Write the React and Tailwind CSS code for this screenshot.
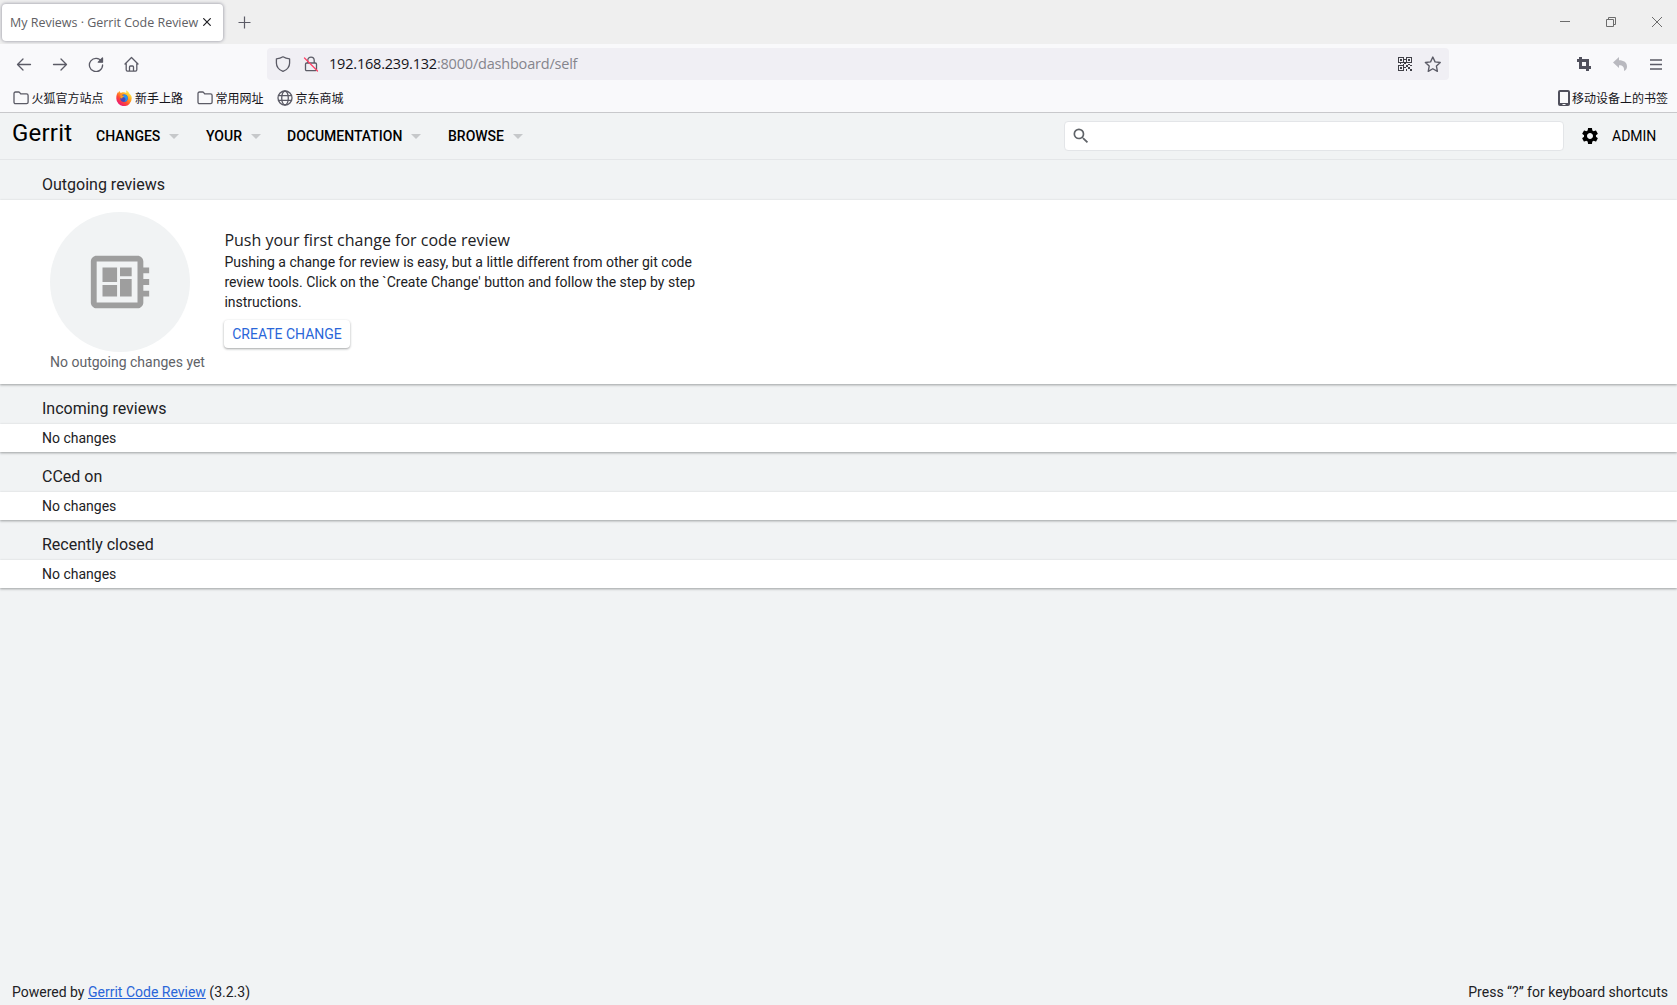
const menus = [
  { label: "CHANGES", className: "w-[110px]" },
  { label: "YOUR", className: "w-[81px]" },
  { label: "DOCUMENTATION", className: "w-[161px]" },
  { label: "BROWSE", className: "w-[90px]" },
];

const emptySections = ["Incoming reviews", "CCed on", "Recently closed"];

const Stroke = ({ children, className = "", size = 16, width = 1.3 }) => (
  <svg
    className={`shrink-0 ${className}`}
    width={size}
    height={size}
    viewBox="0 0 16 16"
    fill="none"
    stroke="currentColor"
    strokeWidth={width}
    strokeLinecap="round"
    strokeLinejoin="round"
  >
    {children}
  </svg>
);

const FolderIcon = () => (
  <Stroke>
    <path d="M1 12.2V3.6C1 2.7 1.6 2 2.5 2h3.1c.5 0 .8.2 1.1.6l1 1.3h5.8c.9 0 1.6.7 1.6 1.6v6.7c0 .9-.7 1.4-1.6 1.4h-11C1.6 13.6 1 13.1 1 12.2z" />
  </Stroke>
);

const GlobeIcon = () => (
  <Stroke>
    <circle cx="8" cy="8" r="7" />
    <ellipse cx="8" cy="8" rx="3.3" ry="7" />
    <path d="M1.5 5.6h13M1.5 10.4h13" />
  </Stroke>
);

const FirefoxIcon = () => (
  <svg className="shrink-0" width="16" height="16" viewBox="0 0 16 16">
    <defs>
      <linearGradient id="fox" x1="0.85" y1="0.1" x2="0.2" y2="0.95">
        <stop offset="0" stopColor="#fff14a" />
        <stop offset="0.35" stopColor="#ffa51e" />
        <stop offset="0.65" stopColor="#ff4a33" />
        <stop offset="1" stopColor="#e8127c" />
      </linearGradient>
    </defs>
    <path
      fill="url(#fox)"
      d="M15.4 6.2c-.4-1-1.2-2-1.8-2.3-.5-1.4-1.8-2.5-3.2-3.7C10 1.6 10.3 2.5 10.6 3 9.5 2.3 8 2.1 6.7 2.3 5.9 2.5 5.4 2.8 5 3.1 4.3 2.8 3.8 2.1 3.7 1.1 2.7 1.7 2.2 2.5 2 3.3c-.1-.4 0-.9 0-1.2C.9 3.5.3 5.7.3 8.3a7.7 7.7 0 0 0 15.4.2c0-.8-.1-1.6-.3-2.3z"
    />
    <circle cx="8" cy="8.2" r="3.7" fill="#4b46b8" />
    <path fill="#2196f3" d="M7.7 4.5c2-.3 4 .8 4 3.7 0 2-1.6 3.5-3.5 3.6 1.5-1.2 1.7-2.5.9-3.7-.5-.9-1.6-1-2.4-.9z" />
    <path fill="#ff9a1e" d="M4.2 5.3c1.1-.6 2.2-.2 2.7.4.5.1 1.1.1 1.3.2 0 .6-1.2.8-1.6 1.3-.2.5 0 .8-.4 1.1-.8.3-1.5-.2-1.8 0z" />
  </svg>
);

const QrIcon = () => (
  <svg className="shrink-0" width="14" height="14" viewBox="0 0 14 14" fill="#3f3f46" shapeRendering="crispEdges">
    <path
      fillRule="evenodd"
      d="M0 0h6v6H0zM1 1v4h4V1zM8 0h6v6H8zM9 1v4h4V1zM0 8h6v6H0zM1 9v4h4V9z"
    />
    <path d="M2 2h2v2H2zM10 2h2v2h-2zM2 10h2v2H2zM6 2h2v1H6zM6 5h2v2H6zM2 6h1v1H2zM5 7h1v1H5zM8 8h2v2H8zM12 8h2v1h-2zM10 10h2v2h-2zM8 12h1v2H8zM12 12h2v2h-2zM6 10h2v1H6zM10 7h2v1h-2z" />
  </svg>
);

const TabStrip = () => (
  <div className="flex h-11 items-center bg-[#efefef] text-[#5b5b66]">
    <div className="ml-0.5 flex h-[37px] w-[221px] items-center rounded bg-white pl-2 shadow-[0_0_3px_1px_rgba(128,128,142,0.55)]">
      <span className="w-[193px] pt-[3px] font-['Open_Sans','Noto_Sans',sans-serif] text-[12.5px] tracking-[-0.015px] whitespace-nowrap text-[#606064]">
        My Reviews · Gerrit Code Review
      </span>
      <svg width="8" height="8" viewBox="0 0 8 8" fill="none" stroke="#202024" strokeWidth="1.2">
        <path d="M.3.3l7.4 7.4M7.7.3L.3 7.7" />
      </svg>
    </div>
    <svg className="mt-px ml-[15px]" width="13" height="13" viewBox="0 0 13 13" fill="none" stroke="currentColor" strokeWidth="1.2">
      <path d="M.5 6.5h12M6.5.5v12" />
    </svg>
    <svg className="mr-[13px] ml-auto text-[#6c6c6c]" width="104" height="12" viewBox="0 0 104 12" fill="none" stroke="currentColor">
      <path d="M0 5.5h10M46.5 3.5h7v7h-7zM48.5 3.5v-2h7v7h-2M92 1l10 10M102 1L92 11" />
    </svg>
  </div>
);

const Toolbar = () => (
  <div className="flex h-10 items-center bg-[#f9f9fb] text-[#5b5b66]">
    <div className="flex w-[267px] items-center gap-5 pl-4">
      <Stroke>
        <path d="M14.5 8.5h-13M7 3L1.5 8.5 7 14" />
      </Stroke>
      <Stroke>
        <path d="M1.5 8.5h13M9 3l5.5 5.5L9 14" />
      </Stroke>
      <Stroke>
        <path d="M13.6 5.5A6.6 6.6 0 1 0 14.6 9" />
        <path d="M14.5 2v4.2h-4.2z" fill="currentColor" />
      </Stroke>
      <Stroke>
        <path d="M1 8l6.500-6.500L14 8M2.200 7.500v6.300c0 .8.5 1.300 1.300 1.300h8c.8 0 1.300-.5 1.300-1.300V7.500M5.500 15v-4c0-.6.4-1 1-1h2c.6 0 1 .4 1 1v4" />
      </Stroke>
    </div>
    <div className="flex h-8 w-[1182px] items-center rounded bg-[#f0eff4] px-2">
      <Stroke>
        <path d="M8 .8C6.200 2 4 2.700 1.400 2.900v4c0 3.800 2.600 6.800 6.600 8.500 4-1.700 6.600-4.700 6.600-8.500v-4C12 2.700 9.800 2 8 .8z" />
      </Stroke>
      <Stroke className="ml-3">
        <path d="M4.800 7V4.300a3.200 3.200 0 0 1 6.400 0V7M3.700 7h8.600c.7 0 1.200.5 1.200 1.200v5.200c0 .7-.5 1.200-1.200 1.200H3.700c-.7 0-1.200-.5-1.200-1.200V8.200C2.500 7.500 3 7 3.700 7z" />
        <path d="M1.500 2l13 13" stroke="#ff4468" />
      </Stroke>
      <span className="ml-2.5 font-['Open_Sans','Noto_Sans',sans-serif] text-[14.5px] tracking-[-0.2px] whitespace-nowrap text-[#15141a]">
        192.168.239.132<span className="text-[#85858c]">:8000/dashboard/self</span>
      </span>
      <div className="ml-auto flex items-center gap-3">
        <QrIcon />
        <Stroke size={17}>
          <path d="M8.300 1l2.100 4.500 4.900.6-3.600 3.400.9 4.900-4.300-2.400L4 14.400l.9-4.900-3.600-3.400 4.900-.6z" />
        </Stroke>
      </div>
    </div>
    <div className="ml-auto flex items-center gap-5 pr-[15px]">
      <svg width="16" height="16" viewBox="0 0 16 16" fill="none" stroke="#50505c" strokeWidth="3">
        <path d="M4.500 1v10.500H15M1 4.500h10.500V15" />
      </svg>
      <svg className="mr-0.5" width="16" height="16" viewBox="0 0 16 16" fill="#b9b9bf">
        <path d="M1 6.500L7 1v3.300c4.800 0 8 2.200 8 6.200 0 2-1 3.700-3 4.500.5-3.800-1.200-5.800-5-5.800V12z" />
      </svg>
      <svg width="12" height="11" viewBox="0 0 12 11" fill="none" stroke="currentColor" strokeWidth="1.3">
        <path d="M0 1h12M0 5.500h12M0 10h12" />
      </svg>
    </div>
  </div>
);

const Bookmark = ({ icon, label, className = "" }) => (
  <div className={`flex items-center gap-[3px] ${className}`}>
    {icon}
    <span className="whitespace-nowrap text-[#15141a]">{label}</span>
  </div>
);

const BookmarksBar = () => (
  <div className="flex h-[29px] items-center justify-between border-b border-[#c8c8cb] bg-[#f9f9fb] pr-[9px] pl-[12.5px] font-['Noto_Sans_CJK_SC',sans-serif] text-xs text-[#5b5b66]">
    <div className="flex items-center">
      <Bookmark icon={<FolderIcon />} label="火狐官方站点" className="w-[103.5px]" />
      <Bookmark icon={<FirefoxIcon />} label="新手上路" className="w-[80.5px]" />
      <Bookmark icon={<FolderIcon />} label="常用网址" className="w-[80px]" />
      <Bookmark icon={<GlobeIcon />} label="京东商城" />
    </div>
    <div className="flex items-center gap-0.5">
      <svg width="12" height="16" viewBox="0 0 12 16" fill="#50505c">
        <path fillRule="evenodd" d="M2 0h8a2 2 0 0 1 2 2v12a2 2 0 0 1-2 2H2a2 2 0 0 1-2-2V2a2 2 0 0 1 2-2zM2 2v11h8V2zM4.500 14v1h3v-1z" />
      </svg>
      <span className="whitespace-nowrap text-[#15141a]">移动设备上的书签</span>
    </div>
  </div>
);

const AppHeader = () => (
  <header className="flex h-[47px] items-center border-b border-[#e4e6e8] pl-3 text-black">
    <div className="w-[84px] pb-1.5 text-2xl tracking-[0.2px]">Gerrit</div>
    <nav className="flex items-center">
      {menus.map((menu) => (
        <div key={menu.label} className={`flex items-center gap-[9px] text-sm font-medium whitespace-nowrap ${menu.className}`}>
          {menu.label}
          <svg className="shrink-0" width="10" height="5" viewBox="0 0 10 5" fill="#c6c8ca">
            <path d="M0 0h10L5 5z" />
          </svg>
        </div>
      ))}
    </nav>
    <div className="ml-auto flex h-[30px] w-[500px] items-center rounded border border-[#e3e5e8] bg-white pl-1.5">
      <svg width="20" height="20" viewBox="0 0 24 24" fill="#5f6368">
        <path d="M15.500 14h-.79l-.28-.27A6.471 6.471 0 0 0 16 9.500 6.500 6.500 0 1 0 9.500 16c1.610 0 3.090-.59 4.230-1.570l.27.280v.79l5 4.990L20.490 19l-4.990-5zm-6 0C7.010 14 5 11.990 5 9.500S7.010 5 9.500 5 14 7.010 14 9.500 11.990 14 9.500 14z" />
      </svg>
    </div>
    <svg className="ml-4" width="20" height="20" viewBox="0 0 24 24" fill="black">
      <path d="M19.140 12.940c.04-.3.060-.61.060-.94 0-.32-.02-.64-.07-.94l2.030-1.580c.18-.14.230-.41.120-.61l-1.920-3.320c-.12-.22-.37-.29-.59-.22l-2.390.96c-.5-.38-1.030-.7-1.620-.94l-.36-2.540c-.04-.24-.24-.41-.48-.41h-3.840c-.24 0-.43.170-.47.410l-.36 2.540c-.59.240-1.130.570-1.620.940l-2.390-.96c-.22-.08-.47 0-.59.220L2.740 8.870c-.12.210-.08.470.120.610l2.030 1.580c-.05.300-.09.630-.09.940s.02.640.070.940l-2.030 1.580c-.18.140-.23.410-.12.610l1.920 3.320c.12.220.37.290.59.220l2.390-.96c.5.380 1.030.7 1.620.94l.36 2.540c.05.240.240.410.480.410h3.840c.24 0 .44-.17.470-.41l.36-2.540c.59-.24 1.130-.56 1.620-.94l2.390.96c.22.080.470 0 .59-.22l1.920-3.320c.12-.22.070-.47-.12-.61l-2.010-1.580zM12 15.600c-1.980 0-3.600-1.620-3.600-3.600s1.620-3.600 3.600-3.600 3.600 1.620 3.600 3.600-1.620 3.600-3.600 3.600z" />
    </svg>
    <span className="ml-3 w-[65px] text-sm">ADMIN</span>
  </header>
);

const SectionTitle = ({ children }) => (
  <h2 className="flex h-10 items-center pt-2.5 pl-[42px] text-base">{children}</h2>
);

const Panel = ({ children, className = "" }) => (
  <div className={`bg-white shadow-[0_1px_2px_0_rgba(60,64,67,0.3),0_1px_3px_0_rgba(60,64,67,0.2)] ${className}`}>
    {children}
  </div>
);

const FirstChange = () => (
  <Panel className="flex h-[184px] pt-3 pl-[50px]">
    <div className="w-[174.4px]">
      <div className="flex h-[140px] w-[140px] items-center justify-center rounded-full bg-[#f1f3f4]">
        <svg width="70" height="70" viewBox="0 0 24 24" fill="#9e9e9e">
          <path d="M22 9V7h-2V5c0-1.100-.9-2-2-2H4c-1.100 0-2 .9-2 2v14c0 1.100.9 2 2 2h14c1.100 0 2-.9 2-2v-2h2v-2h-2v-2h2v-2h-2V9h2zm-4 10H4V5h14v14zM6 13h5v4H6zm6-6h4v3h-4zM6 7h5v5H6zm6 4h4v6h-4z" />
        </svg>
      </div>
      <p className="text-sm whitespace-nowrap text-[#5f6368]">No outgoing changes yet</p>
    </div>
    <div className="w-[480px] pt-4">
      <h3 className="font-['Open_Sans',sans-serif] text-base leading-6">Push your first change for code review</h3>
      <p className="text-sm leading-5">
        Pushing a change for review is easy, but a little different from other git code
        <br />
        review tools. Click on the `Create Change' button and follow the step by step
        <br />
        instructions.
      </p>
      <button className="mt-2 -ml-[0.4px] h-7 w-[126px] rounded bg-white text-sm whitespace-nowrap text-[#2a66d9] shadow-[0_1px_2px_0_rgba(60,64,67,0.3),0_1px_3px_0_rgba(60,64,67,0.2)]">
        CREATE CHANGE
      </button>
    </div>
  </Panel>
);

export default function App() {
  return (
    <div className="flex h-screen flex-col overflow-hidden bg-[#f1f3f4] font-['Roboto',sans-serif] text-[#212124]">
      <TabStrip />
      <Toolbar />
      <BookmarksBar />
      <AppHeader />
      <main className="flex-1">
        <SectionTitle>Outgoing reviews</SectionTitle>
        <FirstChange />
        {emptySections.map((title) => (
          <section key={title}>
            <SectionTitle>{title}</SectionTitle>
            <Panel className="flex h-7 items-center pl-[42px] text-sm">No changes</Panel>
          </section>
        ))}
      </main>
      <footer className="flex justify-between pr-[9px] pb-[3px] pl-3 text-sm">
        <div>
          Powered by{" "}
          <a href="#" className="text-[#2a66d9] underline">
            Gerrit Code Review
          </a>{" "}
          (3.2.3)
        </div>
        <div>Press “?” for keyboard shortcuts</div>
      </footer>
    </div>
  );
}
